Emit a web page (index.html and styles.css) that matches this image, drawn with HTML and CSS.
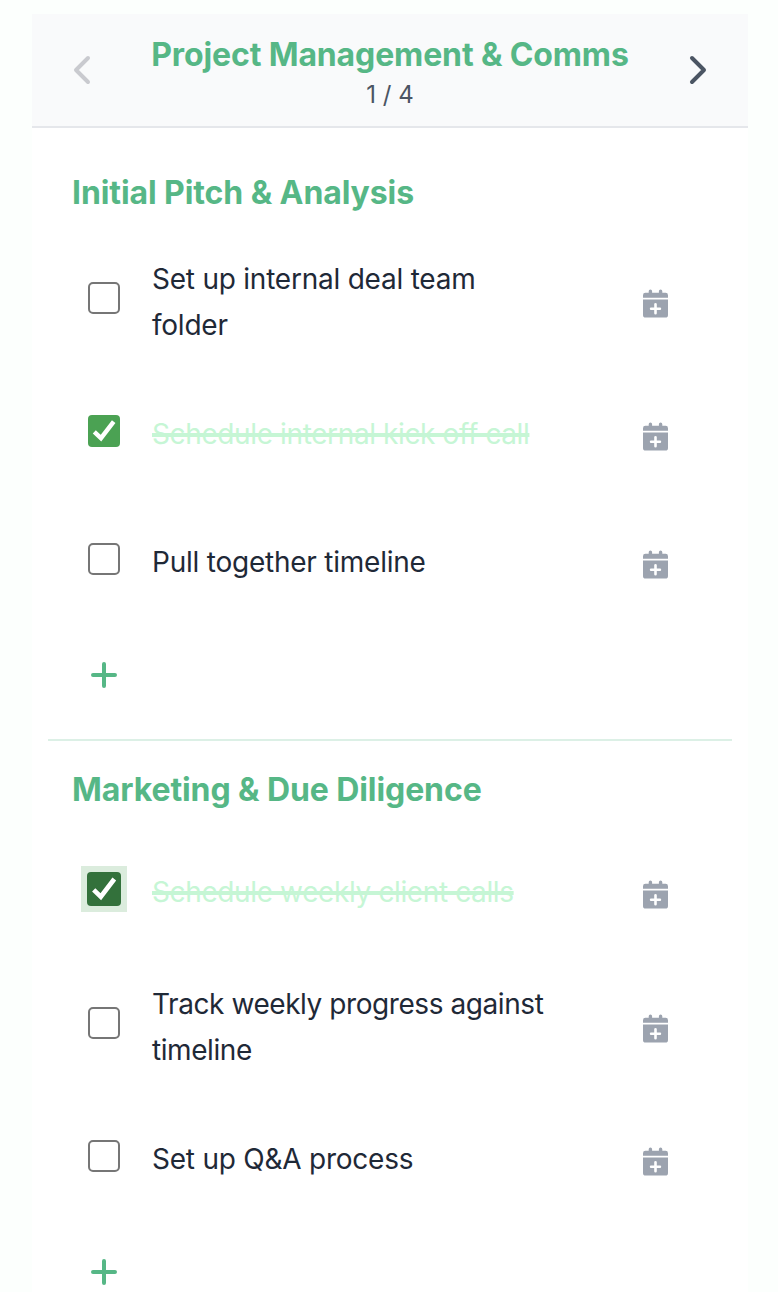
FILE: index.html
```html
<!DOCTYPE html>
<html lang="en">
<head>
<meta charset="utf-8">
<title>Project checklist</title>
<link rel="stylesheet" href="styles.css">
</head>
<body>
<svg class="sprite" aria-hidden="true">
  <symbol id="calendar" viewBox="0 0 26 30">
    <path fill="currentColor" d="M0 8.7V6.2a2.4 2.4 0 0 1 2.4-2.4h3.3V2.2a1.7 1.7 0 0 1 3.4 0v1.6h6.8V2.2a1.7 1.7 0 0 1 3.4 0v1.6h3.3A2.4 2.4 0 0 1 25 6.2v2.5z"/>
    <path fill="currentColor" fill-rule="evenodd" d="M0 10.5h25v15.4a2.6 2.6 0 0 1-2.6 2.6H2.6A2.6 2.6 0 0 1 0 25.900zM11.200 15.200v3.300H8a1.200 1.200 0 0 0 0 2.400h3.200v3.300a1.300 1.300 0 0 0 2.600 0v-3.300H17a1.200 1.200 0 0 0 0-2.400h-3.200v-3.300a1.300 1.300 0 0 0-2.600 0z"/>
  </symbol>
  <symbol id="check" viewBox="0 0 32 32">
    <path d="M6.3 16.800 13 23.200 25.700 6.600" fill="none" stroke="#fff" stroke-width="4.400"/>
  </symbol>
  <symbol id="plus" viewBox="0 0 26 26">
    <path d="M13 2v22M2 13h22" fill="none" stroke="currentColor" stroke-width="4" stroke-linecap="round"/>
  </symbol>
</svg>
<main class="card">
  <header class="header">
    <button class="nav nav-disabled" aria-label="Previous"><svg width="18" height="30" viewBox="0 0 18 30"><path d="M15 3 3 15l12 12"/></svg></button>
    <div class="header-text">
      <h1 class="title">Project Management &amp; Comms</h1>
      <p class="counter">1 / 4</p>
    </div>
    <button class="nav" aria-label="Next"><svg width="18" height="30" viewBox="0 0 18 30"><path d="M3 3l12 12L3 27"/></svg></button>
  </header>
  <section class="section">
    <h2 class="section-title">Initial Pitch &amp; Analysis</h2>
    <ul class="tasks">
      <li class="task"><span class="box"></span><span class="label two-line">Set up internal deal team folder</span><svg class="calendar"><use href="#calendar"/></svg></li>
      <li class="task"><span class="box checked"><svg><use href="#check"/></svg></span><span class="label done">Schedule internal kick off call</span><svg class="calendar"><use href="#calendar"/></svg></li>
      <li class="task"><span class="box"></span><span class="label">Pull together timeline</span><svg class="calendar"><use href="#calendar"/></svg></li>
    </ul>
    <button class="add" aria-label="Add task"><svg><use href="#plus"/></svg></button>
  </section>
  <section class="section">
    <h2 class="section-title">Marketing &amp; Due Diligence</h2>
    <ul class="tasks shifted">
      <li class="task"><span class="box checked focused"><svg><use href="#check"/></svg></span><span class="label done">Schedule weekly client calls</span><svg class="calendar"><use href="#calendar"/></svg></li>
      <li class="task"><span class="box"></span><span class="label two-line tight">Track weekly progress against timeline</span><svg class="calendar"><use href="#calendar"/></svg></li>
      <li class="task"><span class="box"></span><span class="label">Set up Q&amp;A process</span><svg class="calendar"><use href="#calendar"/></svg></li>
    </ul>
    <button class="add" aria-label="Add task"><svg><use href="#plus"/></svg></button>
  </section>
</main>
</body>
</html>
```
FILE: styles.css
```css
* { box-sizing: border-box; margin: 0; padding: 0; }
html { height: 100%; overflow: hidden; }
body {
  height: 1292px;
  overflow: hidden;
  padding: 14px 30px 0 32px;
  background: #fcfffd;
  font-family: Inter, "Liberation Sans", sans-serif;
  color: #1f2937;
}
.sprite { display: none; }
button { border: 0; background: none; }
.card { height: 1278px; background: #fff; }
.header {
  display: flex;
  align-items: center;
  justify-content: space-between;
  height: 114px;
  padding: 0 41px;
  background: #f9fafb;
  border-bottom: 2px solid #e5e7eb;
}
.nav { display: flex; width: 18px; height: 30px; color: #4b5563; }
.nav path { fill: none; stroke: currentColor; stroke-width: 4; stroke-linecap: round; stroke-linejoin: round; }
.nav-disabled { color: #c9cacf; }
.header-text { padding-top: 10px; text-align: center; }
.title, .section-title { font-size: 32px; font-weight: 700; line-height: 40px; letter-spacing: -0.13px; color: #56b786; white-space: nowrap; }
.section-title { padding-left: 24px; letter-spacing: -0.09px; }
.counter { font-size: 24px; line-height: 40px; color: #4b5563; }
.section { height: 597px; margin: 0 16px; padding-top: 29px; }
.section:first-of-type { height: 613px; padding-top: 45px; border-bottom: 2px solid #dcf0e6; }
.tasks { list-style: none; padding: 20px 23px 0 40px; }
.shifted { padding-top: 19px; }
.shifted .task:first-child { margin-bottom: 1px; }
.task { display: flex; align-items: center; min-height: 128px; padding: 23px 40px 23px 0; }
.task .box { flex: none; width: 32px; height: 32px; margin: -8px 32px 0 0; border: 2px solid #767676; border-radius: 5px; }
.box svg { display: block; width: 32px; height: 32px; }
.task .checked { border: 0; background: #4ba253; border-radius: 4px; }
.task .focused { width: 46px; height: 46px; margin: -8px 25px 0 -7px; padding: 6px; background: #dbecdd; border-radius: 0; }
.focused svg { width: 34px; height: 34px; background: #33713b; border-radius: 4px; }
.label { width: 405px; margin-top: -2px; font-size: 28px; line-height: 46px; letter-spacing: -0.23px; }
.two-line { margin-top: 0; }
.tight { letter-spacing: -0.43px; }
.done { letter-spacing: -0.38px; color: #c6f6d5; text-decoration: line-through; text-decoration-thickness: 4px; }
.calendar { flex: none; width: 26px; height: 30px; margin: 4px 0 0 auto; color: #9ca3af; }
.add { display: flex; margin: 35px 0 0 43px; color: #56b786; }
.add svg { width: 26px; height: 26px; }
```
